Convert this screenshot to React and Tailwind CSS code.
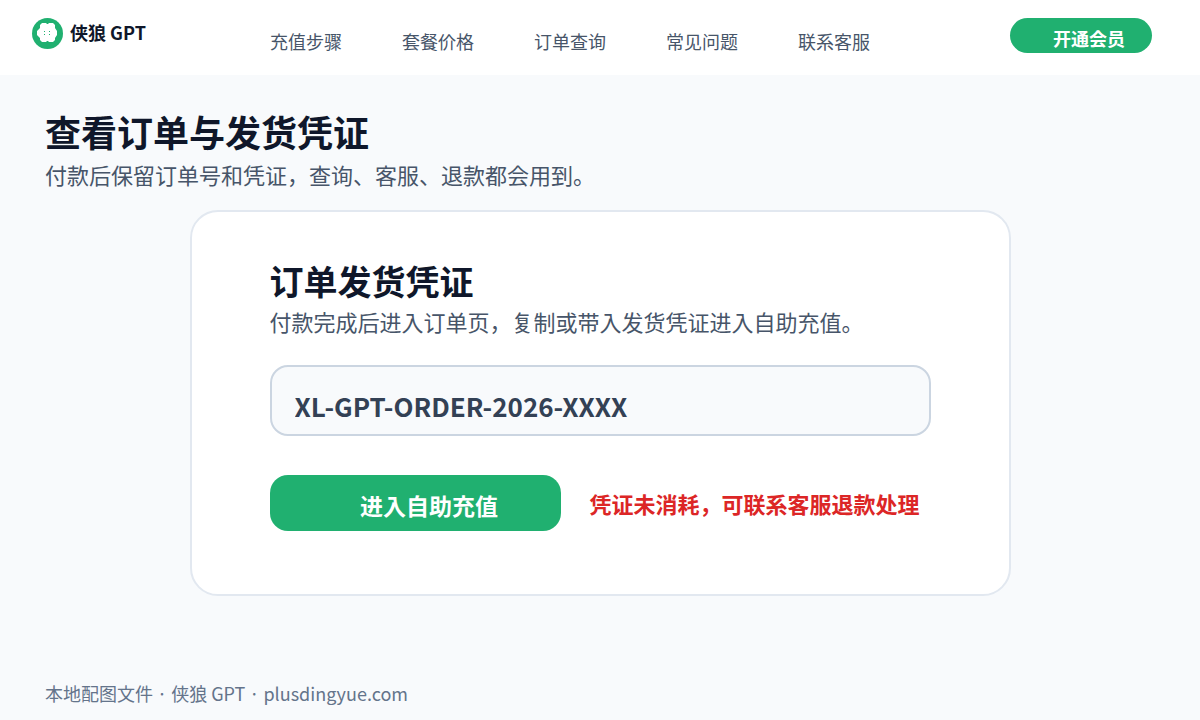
const links = ["充值步骤", "套餐价格", "订单查询", "常见问题", "联系客服"];

function Logo() {
  return (
    <svg className="size-8" viewBox="0 0 32 32" aria-hidden="true">
      <circle cx="15.5" cy="15.5" r="15.5" fill="#20b070" />
      <path
        fill="#fff"
        d="M10 5H14L15 6H16L17 5H21L23 7V10L25 13V17L23 20V22L21 24H17L16 23H15L14 24H10L8 22V20L5 17V13L8 10V7Z"
      />
      <g fill="#20b070">
        <rect x="12" y="13" width="1" height="1" />
        <rect x="17" y="13" width="1" height="1" />
        <rect x="12" y="16" width="1" height="1" />
        <rect x="17" y="16" width="1" height="1" />
      </g>
    </svg>
  );
}

export default function App() {
  return (
    <div className="font-['Noto_Sans_CJK_JP','Noto_Sans_CJK_SC',sans-serif] min-h-screen flex flex-col bg-[#f8fafc] text-[#0f172a]">
      <header className="bg-white h-[75px] flex items-start pl-8 pr-12">
        <a href="#" className="flex items-center gap-1.5 pt-[18px] w-[238px] text-lg leading-7 font-bold">
          <Logo />
          <span className="pb-1">侠狼 GPT</span>
        </a>
        <nav className="flex gap-[60px] pt-[27px] text-lg leading-7 text-[#475569]">
          {links.map((l) => (
            <a key={l} href="#">{l}</a>
          ))}
        </nav>
        <button className="ml-auto mt-[18px] h-[35px] w-[142px] rounded-[18px] bg-[#20b070] pl-4 pt-1 text-lg leading-7 font-bold text-white">
          开通会员
        </button>
      </header>
      <main className="flex-1 px-[45px] pt-[30px]">
        <h1 className="text-4xl leading-[52px] font-bold">查看订单与发货凭证</h1>
        <p className="text-[22px] leading-[34px] text-[#475569]">付款后保留订单号和凭证，查询、客服、退款都会用到。</p>
        <section className="mx-auto mt-[19px] max-w-[821px] rounded-[28px] border-2 border-[#e2e8f0] bg-white px-[78px] pt-[45px] pb-[63px]">
          <h2 className="text-[34px] leading-[48px] font-bold">订单发货凭证</h2>
          <p className="text-[22px] leading-8 text-[#475569]">付款完成后进入订单页，复制或带入发货凭证进入自助充值。</p>
          <input
            aria-label="订单发货凭证"
            defaultValue="XL-GPT-ORDER-2026-XXXX"
            className="mt-7 block h-[71px] w-full rounded-[18px] border-2 border-[#cbd5e1] bg-[#f8fafc] px-[23px] pt-2.5 text-[26px] font-bold text-[#334155]"
          />
          <div className="mt-[39px] flex items-center gap-[29px]">
            <button className="h-14 w-[291px] rounded-[18px] bg-[#20b070] pl-7 pt-1 text-[23px] font-bold text-white">
              进入自助充值
            </button>
            <p className="text-[22px] leading-8 font-bold text-[#dc2626]">凭证未消耗，可联系客服退款处理</p>
          </div>
        </section>
      </main>
      <footer className="px-[45px] pb-[13px] text-lg leading-7 text-[#64748b]">本地配图文件 · 侠狼 GPT · plusdingyue.com</footer>
    </div>
  );
}
